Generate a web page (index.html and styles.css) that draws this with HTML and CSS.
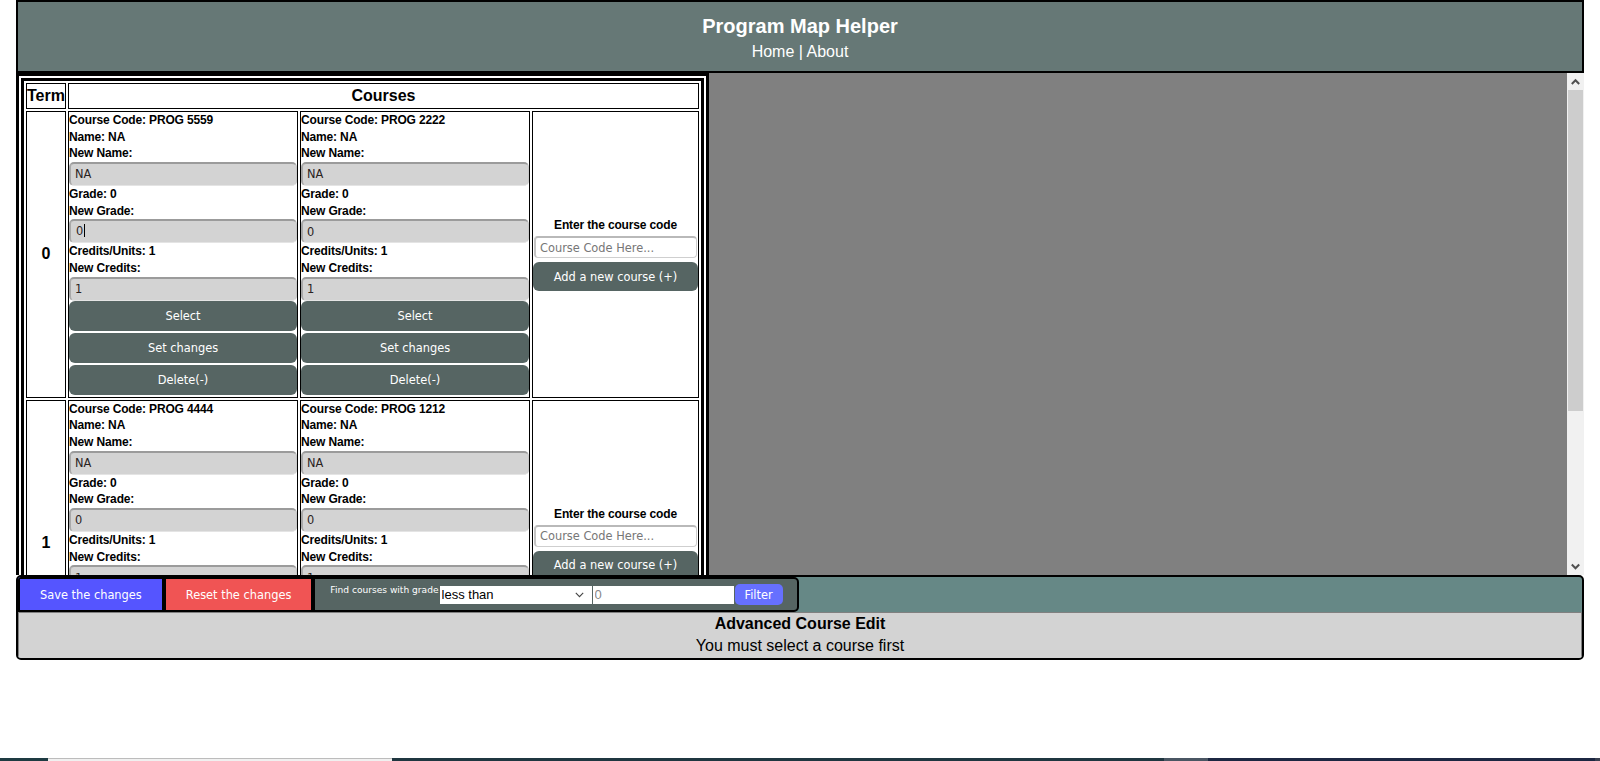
FILE: index.html
```html
<!DOCTYPE html>
<html lang="en">
<head>
<meta charset="utf-8">
<title>Program Map Helper</title>
<link rel="stylesheet" href="styles.css">
</head>
<body>
<div class="app">
  <header class="topbar">
    <h1 class="title">Program Map Helper</h1>
    <nav class="nav"><a href="#">Home</a> | <a href="#">About</a></nav>
  </header>

  <main class="workspace">
    <div class="scroll-area">
      <table class="plan-table">
        <colgroup>
          <col class="col-term">
          <col class="col-course">
          <col class="col-course">
          <col class="col-add">
        </colgroup>
        <thead>
          <tr><th>Term</th><th colspan="3">Courses</th></tr>
        </thead>
        <tbody>
          <tr>
            <td class="term">0</td>
            <td class="course">
              <div class="label">Course Code: PROG 5559</div>
              <div class="label">Name: NA</div>
              <div class="label">New Name:</div>
              <input class="field" value="NA">
              <div class="label">Grade: 0</div>
              <div class="label">New Grade:</div>
              <div class="field field-focus">0<span class="caret"></span></div>
              <div class="label">Credits/Units: 1</div>
              <div class="label">New Credits:</div>
              <input class="field" value="1">
              <button class="btn">Select</button>
              <button class="btn">Set changes</button>
              <button class="btn">Delete(-)</button>
            </td>
            <td class="course">
              <div class="label">Course Code: PROG 2222</div>
              <div class="label">Name: NA</div>
              <div class="label">New Name:</div>
              <input class="field" value="NA">
              <div class="label">Grade: 0</div>
              <div class="label">New Grade:</div>
              <input class="field" value="0">
              <div class="label">Credits/Units: 1</div>
              <div class="label">New Credits:</div>
              <input class="field" value="1">
              <button class="btn">Select</button>
              <button class="btn">Set changes</button>
              <button class="btn">Delete(-)</button>
            </td>
            <td class="add">
              <div class="label">Enter the course code</div>
              <input class="code-input" placeholder="Course Code Here...">
              <button class="btn btn-add">Add a new course (+)</button>
            </td>
          </tr>
          <tr>
            <td class="term">1</td>
            <td class="course">
              <div class="label">Course Code: PROG 4444</div>
              <div class="label">Name: NA</div>
              <div class="label">New Name:</div>
              <input class="field" value="NA">
              <div class="label">Grade: 0</div>
              <div class="label">New Grade:</div>
              <input class="field" value="0">
              <div class="label">Credits/Units: 1</div>
              <div class="label">New Credits:</div>
              <input class="field" value="1">
              <button class="btn">Select</button>
              <button class="btn">Set changes</button>
              <button class="btn">Delete(-)</button>
            </td>
            <td class="course">
              <div class="label">Course Code: PROG 1212</div>
              <div class="label">Name: NA</div>
              <div class="label">New Name:</div>
              <input class="field" value="NA">
              <div class="label">Grade: 0</div>
              <div class="label">New Grade:</div>
              <input class="field" value="0">
              <div class="label">Credits/Units: 1</div>
              <div class="label">New Credits:</div>
              <input class="field" value="1">
              <button class="btn">Select</button>
              <button class="btn">Set changes</button>
              <button class="btn">Delete(-)</button>
            </td>
            <td class="add">
              <div class="label">Enter the course code</div>
              <input class="code-input" placeholder="Course Code Here...">
              <button class="btn btn-add">Add a new course (+)</button>
            </td>
          </tr>
        </tbody>
      </table>
      <div class="canvas"></div>
    </div>
    <div class="vscroll">
      <div class="sb-btn">
        <svg width="17" height="17" viewBox="0 0 17 17"><path d="M4.8 11 L8.5 7.2 L12.2 11" fill="none" stroke="#505050" stroke-width="2"/></svg>
      </div>
      <div class="sb-track"><div class="sb-thumb"></div></div>
      <div class="sb-btn">
        <svg width="17" height="17" viewBox="0 0 17 17"><path d="M4.8 6.5 L8.5 10.3 L12.2 6.5" fill="none" stroke="#505050" stroke-width="2"/></svg>
      </div>
    </div>
  </main>

  <footer class="toolbar">
    <div class="actions">
      <button class="action-btn save">Save the changes</button>
      <button class="action-btn reset">Reset the changes</button>
      <div class="filter">
        <span class="filter-label">Find courses with grade</span>
        <span class="select-wrap">
          <select class="grade-select"><option>less than</option><option>greater than</option><option>equal to</option></select>
          <svg class="chevron" width="9" height="6" viewBox="0 0 9 6"><path d="M0.8 0.8 L4.5 4.6 L8.2 0.8" fill="none" stroke="#444" stroke-width="1.1"/></svg>
        </span>
        <input class="grade-input" placeholder="0">
        <button class="btn-filter">Filter</button>
      </div>
    </div>
    <div class="advanced">
      <div class="adv-title">Advanced Course Edit</div>
      <div class="adv-msg">You must select a course first</div>
    </div>
  </footer>
</div>

<div class="taskbar">
  <span class="tb tb-a"></span>
  <span class="tb tb-b"></span>
  <span class="tb tb-c"></span>
  <span class="tb tb-d"></span>
  <span class="tb tb-e"></span>
  <span class="tb tb-f"></span>
</div>
</body>
</html>
```

FILE: styles.css
```css
html, body {
  margin: 0;
  padding: 0;
  background: #fff;
}

body {
  font-family: "Liberation Sans", Arial, sans-serif;
  color: #000;
}

.app {
  width: 98%;
  margin: 0 auto;
}

/* ---------- header ---------- */
.topbar {
  background: #667876;
  border: 2px solid #000;
  padding: 11.5px 0 10px;
  text-align: center;
  color: #fff;
}

.title {
  margin: 0 0 5.5px;
  font-size: 20px;
  line-height: 24px;
  font-weight: bold;
}

.nav {
  font-size: 16px;
  line-height: 18px;
}

.nav a {
  color: #fff;
  text-decoration: none;
}

/* ---------- workspace ---------- */
.workspace {
  display: flex;
  height: 502px;
  overflow: hidden;
  background: #fff;
}

.scroll-area {
  flex: 1;
  min-width: 0;
  display: flex;
  align-items: flex-start;
  overflow: hidden;
}

.vscroll {
  flex: none;
  width: 17px;
  display: flex;
  flex-direction: column;
  background: #f1f1f1;
}

.sb-btn {
  flex: none;
  height: 17px;
}

.sb-btn svg {
  display: block;
}

.sb-track {
  flex: 1;
  padding: 0 1px 0 1px;
}

.sb-thumb {
  height: 321px;
  background: #cdcdcd;
}

.plan-table {
  flex: none;
  box-sizing: border-box;
  width: 693px;
  table-layout: fixed;
  border: 8px double #000;
  border-spacing: 2px;
  background: #fff;
}

.col-term { width: 40px; }
.col-course { width: 230px; }
.col-add { width: 167px; }

.plan-table th,
.plan-table td {
  border: 1px solid #000;
  padding: 0;
}

.plan-table th {
  font-size: 16px;
  line-height: 18px;
  padding: 3px 0;
  font-weight: bold;
  text-align: center;
}

.term {
  text-align: center;
  vertical-align: middle;
  font-weight: bold;
  font-size: 16px;
}

.plan-table td.course {
  vertical-align: top;
  padding: 0 0 2px;
}

.label {
  font-size: 12px;
  font-weight: bold;
  line-height: 16.67px;
  height: 16.67px;
  letter-spacing: -0.15px;
  white-space: nowrap;
}

.field {
  display: block;
  width: 100%;
  height: 24px;
  box-sizing: border-box;
  margin: 0;
  padding: 0 4px;
  background: #d3d3d3;
  border-style: solid;
  border-width: 2px 1px 1px 2px;
  border-color: #9b9b9b #c9c9c9 #e4e4e4 #a9a9a9;
  border-radius: 5px;
  font-family: "DejaVu Sans", sans-serif;
  font-size: 11.4px;
  color: #2a2222;
  outline: none;
}

.field-focus {
  line-height: 21px;
  padding-left: 5px;
}

.caret {
  display: inline-block;
  width: 1px;
  height: 13px;
  margin-left: 1px;
  vertical-align: -2px;
  background: #000;
}

.btn {
  display: block;
  width: 100%;
  height: 30px;
  margin: 2px 0 0;
  padding: 0;
  border: none;
  border-radius: 6px;
  background: #566563;
  color: #fff;
  font-family: "DejaVu Sans", sans-serif;
  font-size: 11.4px;
}

.field + .btn {
  margin-top: 0;
}

.add {
  vertical-align: middle;
  text-align: center;
}

.code-input {
  display: block;
  width: calc(100% - 2px);
  height: 22px;
  box-sizing: border-box;
  margin: 2px 1px 4px;
  padding: 0 4px;
  background: #fff;
  border: 1px solid #cfcfcf;
  border-top: 2px solid #b9b9b9;
  border-left: 2px solid #c4c4c4;
  border-radius: 4px;
  font-family: "DejaVu Sans", sans-serif;
  font-size: 11.4px;
  color: #222;
}

.code-input::placeholder {
  color: #777;
}

.btn-add {
  height: 29px;
  margin: 0;
}

.canvas {
  flex: 1;
  align-self: stretch;
  background: #808080;
}

/* ---------- toolbar ---------- */
.toolbar {
  border: 2px solid #000;
  border-radius: 5px;
  background: #668886;
  overflow: hidden;
}

.actions {
  display: flex;
  height: 35px;
}

.action-btn {
  height: 35px;
  box-sizing: border-box;
  margin: 0;
  border: 2px solid #000;
  padding: 0 20px;
  color: #fff;
  font-family: "DejaVu Sans", sans-serif;
  font-size: 11.4px;
}

.save { background: #5555ff; }
.reset { background: #f05454; }

.filter {
  display: flex;
  align-items: center;
  gap: 1px;
  height: 35px;
  box-sizing: border-box;
  border: 2px solid #000;
  border-radius: 0 5px 5px 0;
  background: #566563;
  padding: 0 14px 0 15px;
}

.filter-label {
  align-self: flex-start;
  margin-top: 6px;
  font-family: "DejaVu Sans", sans-serif;
  font-size: 9.1px;
  line-height: 11px;
  color: #fff;
  white-space: nowrap;
}

.select-wrap {
  position: relative;
  display: block;
  height: 18px;
}

.grade-select {
  appearance: none;
  -webkit-appearance: none;
  display: block;
  width: 152px;
  height: 18px;
  margin: 0;
  padding: 0 0 0 2px;
  border: none;
  border-radius: 0;
  background: #fff;
  font-family: "Liberation Sans", Arial, sans-serif;
  font-size: 13px;
  color: #000;
}

.chevron {
  position: absolute;
  right: 8px;
  top: 6px;
}

.grade-input {
  display: block;
  width: 141px;
  height: 18px;
  box-sizing: border-box;
  margin: 0;
  padding: 0 2px;
  border: none;
  background: #fff;
  font-family: "Liberation Sans", Arial, sans-serif;
  font-size: 13px;
}

.grade-input::placeholder {
  color: #888;
}

.btn-filter {
  width: 48px;
  height: 21px;
  margin: 0;
  padding: 0;
  border: none;
  border-radius: 5px;
  background: #6670ff;
  color: #fff;
  font-family: "DejaVu Sans", sans-serif;
  font-size: 11.4px;
}

.advanced {
  background: #d3d3d3;
  border-top: 1px solid #808080;
  border-left: 1px solid #808080;
  border-right: 1px solid #808080;
  padding-bottom: 1px;
  text-align: center;
}

.adv-title {
  font-weight: bold;
  font-size: 16px;
  line-height: 22px;
}

.adv-msg {
  font-size: 16px;
  line-height: 22px;
}

/* ---------- bottom strip (taskbar edge) ---------- */
.taskbar {
  position: fixed;
  left: 0;
  right: 0;
  bottom: 0;
  height: 3px;
  display: flex;
}

.tb { display: block; height: 3px; }
.tb-a { width: 48px; background: #1e3b42; }
.tb-b { width: 344px; background: #f0f0f0; box-sizing: border-box; border-top: 1px solid #bcbcbc; }
.tb-c { width: 772px; background: #1f3640; }
.tb-d { width: 44px; background: #4a5663; }
.tb-e { width: 387px; background: #1c2742; }
.tb-f { flex: 1; background: #3a4050; }
```
